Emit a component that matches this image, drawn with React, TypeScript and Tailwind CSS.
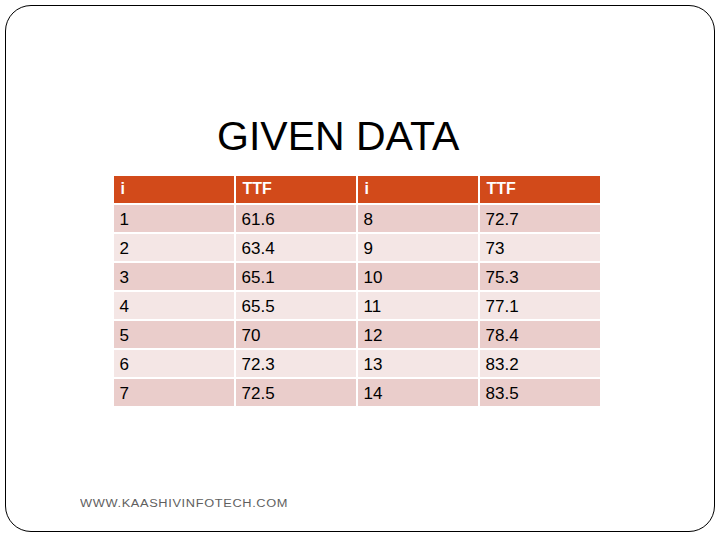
const rows: [string, string, string, string][] = [
  ["1", "61.6", "8", "72.7"],
  ["2", "63.4", "9", "73"],
  ["3", "65.1", "10", "75.3"],
  ["4", "65.5", "11", "77.1"],
  ["5", "70", "12", "78.4"],
  ["6", "72.3", "13", "83.2"],
  ["7", "72.5", "14", "83.5"],
];

const font = { fontFamily: '"Liberation Sans", Arial, sans-serif' };

const App = () => {
  return (
    <div className="w-[720px] h-[540px] bg-white pt-[5px] pl-[5px] pr-[5px] pb-[8px]" style={font}>
      <div className="h-full border-[1.5px] border-black rounded-[26px] flex flex-col">
        {/* Title */}
        <h1 className="mt-[110px] pl-[211px] text-[41px] leading-none text-black">GIVEN DATA</h1>

        {/* Table */}
        <div className="mt-[18.5px] ml-[107.5px] grid grid-cols-[repeat(4,120px)] gap-[2px] w-fit">
          {["i", "TTF", "i", "TTF"].map((h, i) => (
            <div key={i} className="h-[27px] bg-[#d24a1a] text-white font-bold text-[16px] flex items-center pl-[7px]">
              {h}
            </div>
          ))}
          {rows.map((r, ri) =>
            r.map((c, ci) => (
              <div
                key={`${ri}-${ci}`}
                className={`h-[27px] flex items-center pl-[6px] pt-[3px] text-[17px] text-black ${ri % 2 === 0 ? "bg-[#eacdcb]" : "bg-[#f4e6e5]"}`}
              >
                {c}
              </div>
            ))
          )}
        </div>

        {/* Footer */}
        <p className="w-fit mt-[93.5px] ml-[73.5px] text-[10px] leading-none tracking-[0.5px] scale-x-[1.28] origin-left text-[#5f5f5f]">
          WWW.KAASHIVINFOTECH.COM
        </p>
      </div>
    </div>
  );
};

export default App;
